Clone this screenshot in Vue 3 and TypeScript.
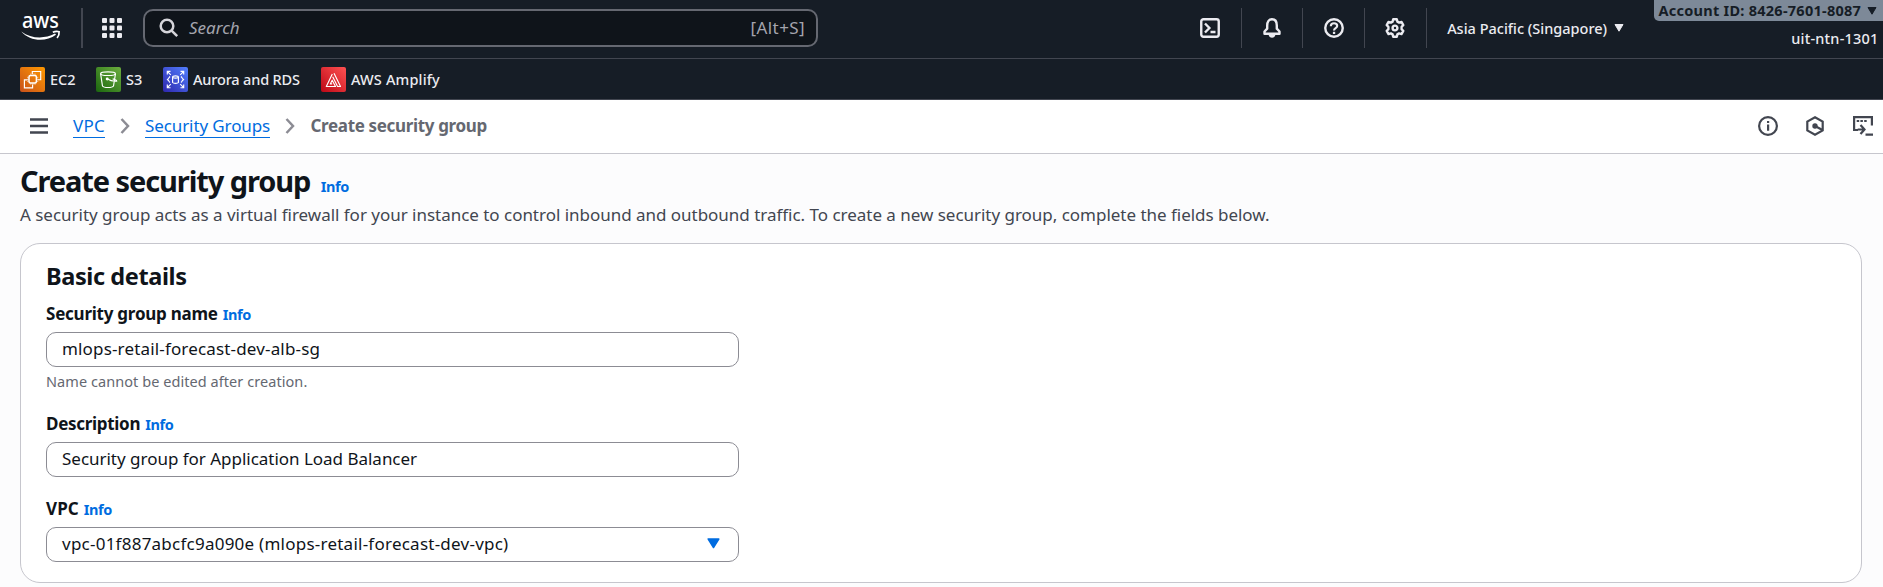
<script setup lang="ts">
type Service = { id: string; name: string }
type Field = { id: string; label: string; value: string; hint?: string; select?: boolean }

const services: Service[] = [
  { id: 'ec2', name: 'EC2' },
  { id: 's3', name: 'S3' },
  { id: 'rds', name: 'Aurora and RDS' },
  { id: 'amplify', name: 'AWS Amplify' },
]

const fields: Field[] = [
  { id: 'name', label: 'Security group name', value: 'mlops-retail-forecast-dev-alb-sg', hint: 'Name cannot be edited after creation.' },
  { id: 'description', label: 'Description', value: 'Security group for Application Load Balancer' },
  { id: 'vpc', label: 'VPC', value: 'vpc-01f887abcfc9a090e (mlops-retail-forecast-dev-vpc)', select: true },
]

const dots = [0, 7.5, 15]
</script>

<template>
  <div class="page">
    <header class="topnav">
      <svg class="logo" width="40" height="40" viewBox="0 -12 40 40">
        <text x="1" y="14" class="logo-text" textLength="37" lengthAdjust="spacingAndGlyphs">aws</text>
        <path d="M.3 17.4C10 24.6 23 25.4 34 19.6l1 1.2C24.500 28.300 9 27.400.3 17.400Z" fill="#fff" />
        <path d="M31.800 18.200c2.300-1 4.600-1.100 6.300-.5.300 2.300-.5 4.400-2 6.300" fill="none" stroke="#fff" stroke-width="1.700" />
      </svg>
      <span class="logo-divider"></span>
      <svg class="apps" width="20" height="20" viewBox="0 0 20 20" fill="#ebebf0">
        <template v-for="y in dots" :key="y">
          <rect v-for="x in dots" :key="x" :x="x" :y="y" width="5" height="5" rx="1" />
        </template>
      </svg>
      <div class="search">
        <svg width="20" height="20" viewBox="0 0 20 20" fill="none" stroke="#d5d5da" stroke-width="2.500">
          <circle cx="8" cy="8" r="6.300" /><path d="m12.600 12.600 5.600 5.600" />
        </svg>
        <span class="search-placeholder">Search</span>
        <span class="search-key">[Alt+S]</span>
      </div>
      <nav class="tools">
        <span class="tool">
          <svg width="20" height="20" viewBox="0 0 20 20" class="ico">
            <rect x="1.250" y="1.250" width="17.500" height="17.500" rx="2.200" /><path d="m5 5.500 4.400 4.500L5 14.500M10.500 14h5" />
          </svg>
        </span>
        <span class="tool">
          <svg width="20" height="20" viewBox="0 0 20 20" class="ico">
            <path d="M5.200 7.500C5.200 3.500 7 1.250 10 1.250s4.800 2.250 4.800 6.250v3.200l2.700 2.800v2.300h-15v-2.300l2.700-2.800Z" stroke-linejoin="round" /><path d="M6.500 16.200C7 21 13 21 13.500 16.200Z" fill="#ebebf0" stroke="none" />
          </svg>
        </span>
        <span class="tool">
          <svg width="20" height="20" viewBox="0 0 20 20" class="ico">
            <circle cx="10" cy="10" r="8.750" /><path d="M6.800 8.200C6.800 6.200 8.200 5.300 10 5.300s3.200 1.100 3.200 2.700c0 2.200-3.200 2.200-3.200 4.600" stroke-width="2.100" /><path d="M8.900 13.800h2.300V16H8.900z" fill="#ebebf0" stroke="none" />
          </svg>
        </span>
        <span class="tool">
          <svg width="20" height="20" viewBox="0 0 20 20" class="ico" stroke-linejoin="round">
            <path d="M8.200 1.250h3.600l.6 2.400 1.700 1 2.400-.7 1.800 3.100-1.700 1.700v2.500l1.700 1.700-1.800 3.100-2.400-.7-1.700 1-.6 2.400H8.200l-.6-2.400-1.700-1-2.400.7-1.800-3.100 1.700-1.700v-2.500L1.700 7.050l1.800-3.100 2.400.7 1.700-1Z" /><circle cx="10" cy="10" r="2.400" />
          </svg>
        </span>
      </nav>
      <div class="region">
        <span>Asia Pacific (Singapore)</span>
        <svg width="10" height="8" viewBox="0 0 10 8"><path d="M1 .5h8L5 7.200Z" fill="#ebebf0" stroke="#ebebf0" stroke-linejoin="round" /></svg>
      </div>
      <div class="account">
        <div class="account-id">
          <span>Account ID: 8426-7601-8087</span>
          <svg width="10" height="8" viewBox="0 0 10 8"><path d="M1 .5h8L5 7.200Z" fill="#161d26" stroke="#161d26" stroke-linejoin="round" /></svg>
        </div>
        <div class="account-user">uit-ntn-1301</div>
      </div>
    </header>

    <nav class="favorites">
      <a v-for="s in services" :key="s.id" class="service" :class="'is-' + s.id">
        <svg width="25" height="25" viewBox="0 0 25 25" fill="none" stroke="#fff" stroke-width="1.150">
          <template v-if="s.id === 'ec2'">
            <rect x="9" y="8.600" width="7.400" height="7.400" rx="1.500" stroke-width="1.500" />
            <path d="M12.300 7V4.500h8.400v8.200h-3M7.500 12.800H4.400v8h8.200V17.600" />
            <path d="M10.800 8V6.500M13 8V6.500M15 8V6.500M10.800 16.200v1.600m2.200-1.600v1.600m2-1.600v1.600M8.500 10.300H7m1.500 2H7m1.500 2H7m9.800-4h1.500m-1.500 2h1.500m-1.500 2h1.500" stroke-width=".6" />
          </template>
          <template v-else-if="s.id === 's3'">
            <ellipse cx="12" cy="6.700" rx="7.400" ry="1.800" />
            <path d="M4.600 6.700 6.500 19c1.200 2 9.800 2 11 0l2-12.300M11 11.800c3 1.700 6.500 2.900 9.700 2.300-.2-1-2-1.700-4-2.200" />
            <circle cx="11.200" cy="12" r=".9" fill="#fff" />
          </template>
          <template v-else-if="s.id === 'rds'">
            <path d="m4.300 4.300 3.500 3.500M4.300 7.500V4.300h3.200M20.700 4.300l-3.500 3.500m3.500-.3V4.300h-3.200M4.300 20.700l3.500-3.500m-3.500.3v3.200h3.200m13.200 0-3.500-3.500m3.500.3v3.200h-3.200" />
            <path d="M9.600 10v5.500c.8 1.200 5 1.200 5.800 0V10M7 9.500c-1 1.100-1.300 2-2.500 3 1.200 1 1.500 1.900 2.500 3m11-6c1 1.100 1.300 2 2.500 3-1.200 1-1.500 1.900-2.500 3" /><ellipse cx="12.500" cy="10" rx="2.900" ry="1.100" />
          </template>
          <template v-else>
            <path d="M11.300 7 5.300 19.500h9.200l-3.300-6.300-1.900 3.700h1.900M13 6.200l6.500 13.300h-2.900L11.700 9.700" stroke-linejoin="round" />
          </template>
        </svg>
        <span>{{ s.name }}</span>
      </a>
    </nav>

    <div class="crumbs">
      <svg class="menu" width="18" height="16" viewBox="0 0 18 16" stroke="#424650" stroke-width="2.400"><path d="M0 1.500h18M0 8h18M0 14.500h18" /></svg>
      <a class="crumb vpc">VPC</a>
      <svg class="chev" width="10" height="16" viewBox="0 0 10 16"><path d="m1.500 1 6.500 7-6.500 7" /></svg>
      <a class="crumb groups">Security Groups</a>
      <svg class="chev" width="10" height="16" viewBox="0 0 10 16"><path d="m1.500 1 6.500 7-6.500 7" /></svg>
      <span class="current">Create security group</span>
      <div class="panel-icons">
        <svg width="20" height="20" viewBox="0 0 20 20" class="pico"><circle cx="10" cy="10" r="8.900" /><path d="M9 8.400h2.200v6.400H9zM9 4.900h2.200V7H9z" fill="#424650" stroke="none" /></svg>
        <svg width="20" height="20" viewBox="0 0 20 20" class="pico"><path d="m10 1.300 7.700 4.300v8.800L10 18.700l-7.700-4.300V5.600Z" /><circle cx="10" cy="10" r="2.700" fill="#424650" stroke="none" /><path d="m10 10 7 3.700" /></svg>
        <svg width="20" height="20" viewBox="0 0 20 20" class="pico"><path d="M5 14H1.100V1.100h17.800V9.500M4.700 13.500h5.800M7.500 9l4 4.400-4 4.600M12.500 18.700H20" /><path d="M3.700 5h2.500m1.200 0h2.500m1.300 0h2.500" /></svg>
      </div>
    </div>

    <main class="content">
      <div class="title-row"><h1>Create security group</h1><a class="info">Info</a></div>
      <p class="lead">A security group acts as a virtual firewall for your instance to control inbound and outbound traffic. To create a new security group, complete the fields below.</p>

      <section class="card">
        <h2>Basic details</h2>
        <div v-for="f in fields" :key="f.id" class="field" :class="'field-' + f.id">
          <div class="label-row"><span class="label">{{ f.label }}</span><a class="info">Info</a></div>
          <div class="input">
            <span>{{ f.value }}</span>
            <svg v-if="f.select" width="13" height="11" viewBox="0 0 13 11"><path d="M1.200 1h10.600L6.500 9.500Z" fill="#006ce0" stroke="#006ce0" stroke-width="1.500" stroke-linejoin="round" /></svg>
          </div>
          <div v-if="f.hint" class="hint">{{ f.hint }}</div>
        </div>
      </section>
    </main>
  </div>
</template>

<style>
body {
  background: #fcfcfd;
}
</style>

<style scoped>
.page {
  height: 587px;
  overflow: hidden;
  background: #fcfcfd;
  color: #0f141a;
  font: 17px/25px 'Noto Sans', 'Open Sans', sans-serif;
}
svg {
  display: block;
  flex: none;
}
.topnav {
  display: flex;
  align-items: flex-start;
  box-sizing: border-box;
  height: 59px;
  border-bottom: 1px solid #424650;
  background: #161d26;
  color: #ebebf0;
  white-space: nowrap;
}
.logo {
  margin: 2px 0 0 21px;
}
.logo-text {
  fill: #fff;
  font-size: 22px;
  font-weight: 500;
}
.logo-divider {
  width: 2px;
  height: 40px;
  margin: 8px 19px 0 20px;
  background: #424650;
}
.apps {
  margin-top: 18px;
}
.search {
  display: flex;
  align-items: center;
  box-sizing: border-box;
  width: 675px;
  height: 38px;
  margin: 9px 0 0 21px;
  padding: 0 11px 0 14px;
  border: 2px solid #656871;
  border-radius: 10px;
  background: #0f141a;
}
.search-placeholder {
  margin: -2px auto 0 10px;
  color: #a4a4ad;
  font-style: italic;
}
.search-key {
  margin-top: -2px;
  color: #a4a4ad;
  letter-spacing: 0.400px;
}
.tools {
  display: flex;
  margin: 8px 0 0 362px;
}
.tool {
  display: flex;
  align-items: center;
  justify-content: center;
  width: 60.670px;
  height: 40px;
  border-right: 1px solid #424650;
}
.ico {
  fill: none;
  stroke: #ebebf0;
  stroke-width: 2.400;
}
.region {
  display: flex;
  align-items: center;
  height: 56px;
  margin-left: 20.500px;
  font-size: 14.500px;
  font-weight: 500;
}
.region svg {
  margin-left: 7px;
}
.account {
  display: flex;
  flex-direction: column;
  align-items: flex-end;
  margin-left: auto;
  font-size: 14.500px;
}
.account-id {
  display: flex;
  align-items: center;
  justify-content: space-between;
  box-sizing: border-box;
  width: 229px;
  height: 21px;
  padding: 0 6px 0 4.500px;
  border-bottom-left-radius: 5px;
  background: #7d8998;
  color: #161d26;
  font-weight: 700;
  letter-spacing: 0.260px;
}
.account-user {
  margin: 5px 4.500px 0 0;
  font-weight: 500;
  letter-spacing: 0.200px;
}
.favorites {
  display: flex;
  align-items: center;
  box-sizing: border-box;
  height: 41px;
  padding-left: 20px;
  border-bottom: 1px solid #424650;
  background: #161d26;
  color: #ebebf0;
  font-size: 14.500px;
  font-weight: 500;
  white-space: nowrap;
}
.service {
  display: flex;
  align-items: center;
  gap: 5px;
}
.service svg {
  border-radius: 2px;
}
.is-ec2 {
  width: 76px;
}
.is-ec2 svg {
  background: linear-gradient(45deg, #c8511b, #ff9900);
}
.is-s3 {
  width: 67px;
}
.is-s3 svg {
  background: linear-gradient(45deg, #1b660f, #6cae3e);
}
.is-rds {
  width: 158px;
  letter-spacing: -0.160px;
}
.is-rds svg {
  background: linear-gradient(45deg, #2e27ad, #527fff);
}
.is-amplify {
  letter-spacing: 0.150px;
}
.is-amplify svg {
  background: linear-gradient(45deg, #bd0816, #ff5252);
}
.crumbs {
  display: flex;
  align-items: center;
  box-sizing: border-box;
  height: 54px;
  padding: 0 10.500px 1px 30px;
  border-bottom: 1px solid #c6c6cd;
  background: #fff;
}
.crumb {
  height: 23px;
  margin-top: -1px;
  border-bottom: 1px solid #006ce0;
  color: #006ce0;
  line-height: 24px;
}
.vpc {
  width: 32px;
  margin-left: 25px;
  letter-spacing: 0.200px;
}
.groups {
  width: 125px;
  margin-left: 15px;
  letter-spacing: -0.100px;
  white-space: nowrap;
}
.chev {
  margin-left: 15px;
  fill: none;
  stroke: #8c8c94;
  stroke-width: 2.500;
}
.current {
  margin: -1px 0 0 15.500px;
  color: #656871;
  font-weight: 700;
  letter-spacing: -0.340px;
}
.panel-icons {
  display: flex;
  gap: 27.500px;
  margin-left: auto;
}
.pico {
  fill: none;
  stroke: #424650;
  stroke-width: 2.200;
}
.content {
  padding: 8px 21px 0 20px;
}
.title-row {
  display: flex;
  align-items: baseline;
  height: 37px;
}
h1 {
  margin: 0;
  font-size: 29px;
  font-weight: 700;
  line-height: 37px;
  letter-spacing: -1.090px;
}
.info {
  color: #006ce0;
  font-size: 14.500px;
  font-weight: 700;
  letter-spacing: -0.400px;
}
.title-row .info {
  margin-left: 10.500px;
}
.lead {
  margin: 0 0 13px;
  color: #424650;
  line-height: 31px;
  letter-spacing: -0.024px;
}
.card {
  box-sizing: border-box;
  height: 340px;
  padding: 17px 25px 0;
  border: 1px solid #c6c6cd;
  border-radius: 20px;
  background: #fff;
}
h2 {
  margin: 0 0 10px;
  font-size: 23.500px;
  font-weight: 700;
  line-height: 30px;
  letter-spacing: -0.400px;
}
.field {
  width: 693px;
  margin-bottom: 19px;
}
.label-row {
  display: flex;
  align-items: baseline;
  height: 25px;
  margin-bottom: 6px;
}
.label {
  font-weight: 700;
  letter-spacing: -0.240px;
}
.field-description .label {
  letter-spacing: -0.300px;
}
.field-vpc .label {
  letter-spacing: 0.100px;
}
.label-row .info {
  margin-left: 5px;
}
.input {
  display: flex;
  align-items: center;
  justify-content: space-between;
  box-sizing: border-box;
  height: 35px;
  padding: 0 18.500px 2px 15px;
  border: 1px solid #8c8c94;
  border-radius: 10px;
  background: #fff;
}
.field-name .input {
  letter-spacing: 0.160px;
}
.field-description .input {
  letter-spacing: -0.020px;
}
.field-vpc .input {
  letter-spacing: 0.240px;
}
.hint {
  margin-top: 4px;
  color: #656871;
  font-size: 14.500px;
  line-height: 21px;
  letter-spacing: 0.060px;
}
</style>
